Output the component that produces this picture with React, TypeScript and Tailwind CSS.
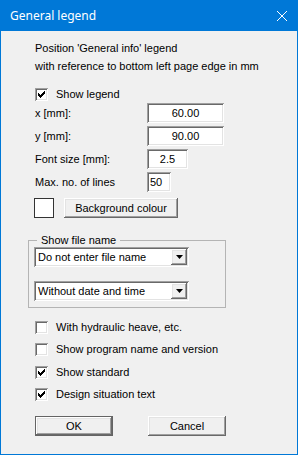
import React from 'react';

const sunken =
  'bg-white shadow-[inset_1px_1px_#a0a0a0,inset_-1px_-1px_#ffffff,inset_2px_2px_#696969,inset_-2px_-2px_#e3e3e3]';
const raised =
  'bg-[#f0f0f0] shadow-[inset_-1px_-1px_#696969,inset_1px_1px_#ffffff,inset_-2px_-2px_#a0a0a0,inset_2px_2px_#e3e3e3]';

function CheckBox({ checked, label, className = '' }: { checked?: boolean; label: string; className?: string }) {
  return (
    <div className={`flex items-center h-[13px] ${className}`}>
      <div className={`w-[13px] h-[13px] flex items-center justify-center ${sunken}`}>
        {checked && (
          <svg width="7" height="7" viewBox="0 0 7 7">
            <path d="M0 2h1v1h1v1h1V3h1V2h1V1h1V0h1v3H6v1H5v1H4v1H3v1H2V6H1V5H0z" fill="#000" />
          </svg>
        )}
      </div>
      <span className="ml-[8px]">{label}</span>
    </div>
  );
}

function Field({ label, value, width, left, className = '' }: { label: string; value: string; width: string; left?: boolean; className?: string }) {
  return (
    <div className={`flex items-center h-[20px] ${className}`}>
      <span className="w-[112px]">{label}</span>
      <div className={`h-[20px] flex items-center ${width} ${left ? 'pl-[3px]' : 'justify-center'} ${sunken}`}>
        {value}
      </div>
    </div>
  );
}

function Combo({ value, className = '' }: { value: string; className?: string }) {
  return (
    <div className={`w-[155px] h-[20px] p-[2px] flex items-center ${sunken} ${className}`}>
      <span className="flex-1 pl-[2px]">{value}</span>
      <div className={`w-[16px] h-[16px] flex items-center justify-center ${raised}`}>
        <svg width="7" height="4" viewBox="0 0 7 4">
          <path d="M0 0h7L3.5 4z" fill="#000" />
        </svg>
      </div>
    </div>
  );
}

export default function App() {
  return (
    <div className="w-[298px] h-[455px] flex flex-col bg-[#0078d7] text-[11px] leading-[13px] text-black font-['Liberation_Sans',Arial,sans-serif]">
      {/* Title bar */}
      <div className="h-[31px] flex items-center justify-between pl-[10px] pr-[11px] text-white text-[12px] font-['Noto_Sans',sans-serif]">
        <span>General legend</span>
        <svg width="10" height="10" viewBox="0 0 10 10">
          <path d="M0 0L10 10M10 0L0 10" stroke="#fff" strokeWidth="1" />
        </svg>
      </div>

      {/* Body */}
      <div className="flex-1 mx-[1px] mb-[1px] bg-[#f0f0f0] pl-[27px] pt-[8px]">
        <div className="pl-[7px]">
          <div className="leading-[18px]">
            <div>Position 'General info' legend</div>
            <div>with reference to bottom left page edge in mm</div>
          </div>
          <CheckBox checked label="Show legend" className="mt-[13px]" />
          <Field label="x [mm]:" value="60.00" width="w-[77px]" className="mt-[2px]" />
          <Field label="y [mm]:" value="90.00" width="w-[77px]" className="mt-[3px]" />
          <Field label="Font size [mm]:" value="2.5" width="w-[41px]" className="mt-[3px]" />
          <Field label="Max. no. of lines" value="50" width="w-[24px]" left className="mt-[3px]" />
        </div>

        <div className="flex items-center mt-[6px] pl-[6px]">
          <div className="w-[20px] h-[20px] bg-white border border-[#333]" />
          <div className={`ml-[10px] w-[114px] h-[20px] flex items-center justify-center ${raised}`}>
            Background colour
          </div>
        </div>

        <fieldset className="mt-[16px] w-[198px] border border-[#b4b4b4] pl-[5px] pb-[6px]">
          <legend className="ml-[3px] px-[4px] leading-[13px]">Show file name</legend>
          <Combo value="Do not enter file name" />
          <Combo value="Without date and time" className="mt-[14px]" />
        </fieldset>

        <div className="pl-[7px]">
          <CheckBox label="With hydraulic heave, etc." className="mt-[13px]" />
          <CheckBox label="Show program name and version" className="mt-[9px]" />
          <CheckBox checked label="Show standard" className="mt-[10px]" />
          <CheckBox checked label="Design situation text" className="mt-[9px]" />

          <div className="flex mt-[15px] gap-[35px]">
            <div className="w-[78px] h-[20px] border border-[#646464]">
              <div className={`w-full h-full flex items-center justify-center ${raised}`}>OK</div>
            </div>
            <div className={`w-[78px] h-[20px] flex items-center justify-center ${raised}`}>Cancel</div>
          </div>
        </div>
      </div>
    </div>
  );
}
